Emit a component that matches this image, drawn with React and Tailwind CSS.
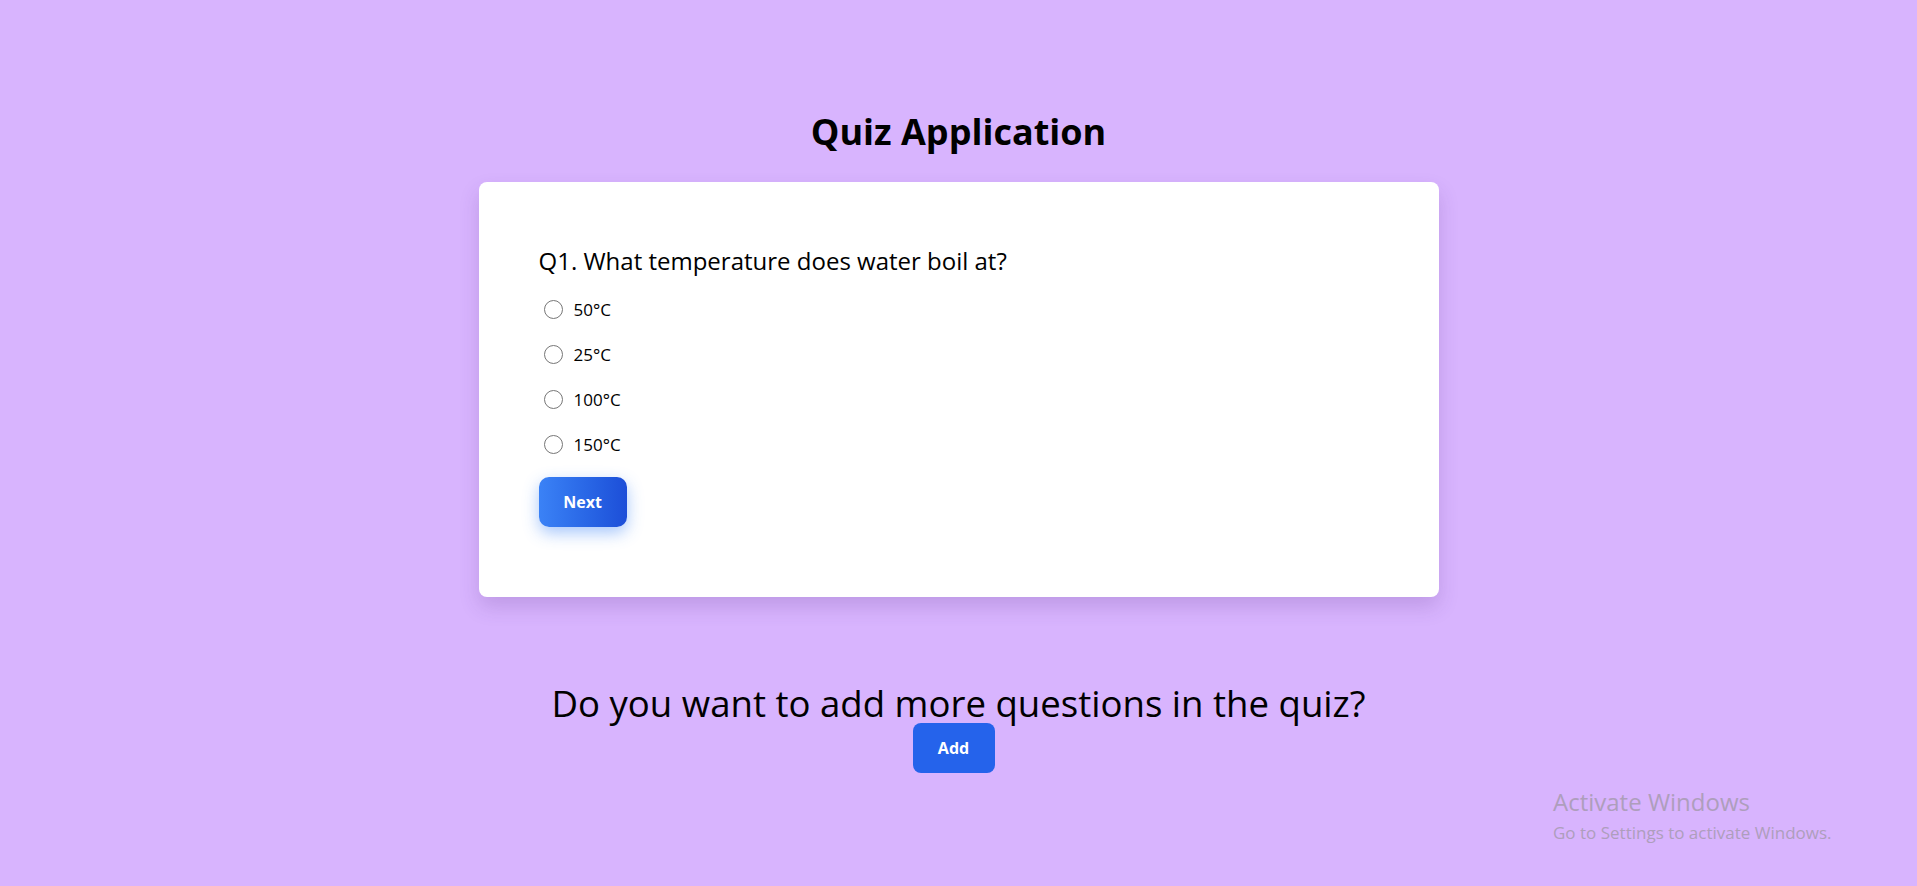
import React, { useState } from "react";

const options = ["50°C", "25°C", "100°C", "150°C"];

export default function App() {
  const [selected, setSelected] = useState(null);
  return (
    <div
      className="relative min-h-screen w-full bg-[#d8b4fe] flex flex-col items-center pt-[112px] text-black overflow-hidden"
      style={{ fontFamily: '"Open Sans", "Noto Sans", sans-serif' }}
    >
      <h1 className="text-[36px] leading-[40px] font-bold mb-[30px]">Quiz Application</h1>

      <div className="w-[960px] bg-white rounded-lg shadow-[0_10px_20px_rgba(80,40,120,0.18)] pt-[63px] pb-[70px] px-[60px]">
        <h2 className="text-[24px] leading-[32px] font-medium mb-[10px]">
          Q1. What temperature does water boil at?
        </h2>
        <div className="flex flex-col">
          {options.map((o, i) => (
            <label key={o} className="flex items-center h-[45px] cursor-pointer">
              <input
                type="radio"
                name="q1"
                checked={selected === i}
                onChange={() => setSelected(i)}
                className="appearance-none w-[19px] h-[19px] rounded-full border-[1.5px] border-[#767676] ml-[5px] mr-[11px] bg-white checked:border-[5px] checked:border-blue-600"
              />
              <span className="text-[17px] leading-[24px] font-medium">{o}</span>
            </label>
          ))}
        </div>
        <button className="mt-[10px] w-[88px] h-[50px] rounded-[10px] bg-gradient-to-r from-[#3b82f6] to-[#1d4ed8] text-white text-[16px] font-bold shadow-[0_6px_16px_rgba(59,130,246,0.45)]">
          Next
        </button>
      </div>

      <h2 className="mt-[86px] text-[36.6px] leading-[40px] font-normal">
        Do you want to add more questions in the quiz?
      </h2>
      <button className="mr-[10px] w-[82px] h-[50px] rounded-lg bg-[#2563eb] text-white text-[16px] font-bold">
        Add
      </button>

      <div className="absolute left-[1553px] top-[787px] text-[#ae9ebc] pointer-events-none">
        <div className="text-[24px] leading-[30px]">Activate Windows</div>
        <div className="text-[17px] leading-[22px] mt-[5px]">Go to Settings to activate Windows.</div>
      </div>
    </div>
  );
}
